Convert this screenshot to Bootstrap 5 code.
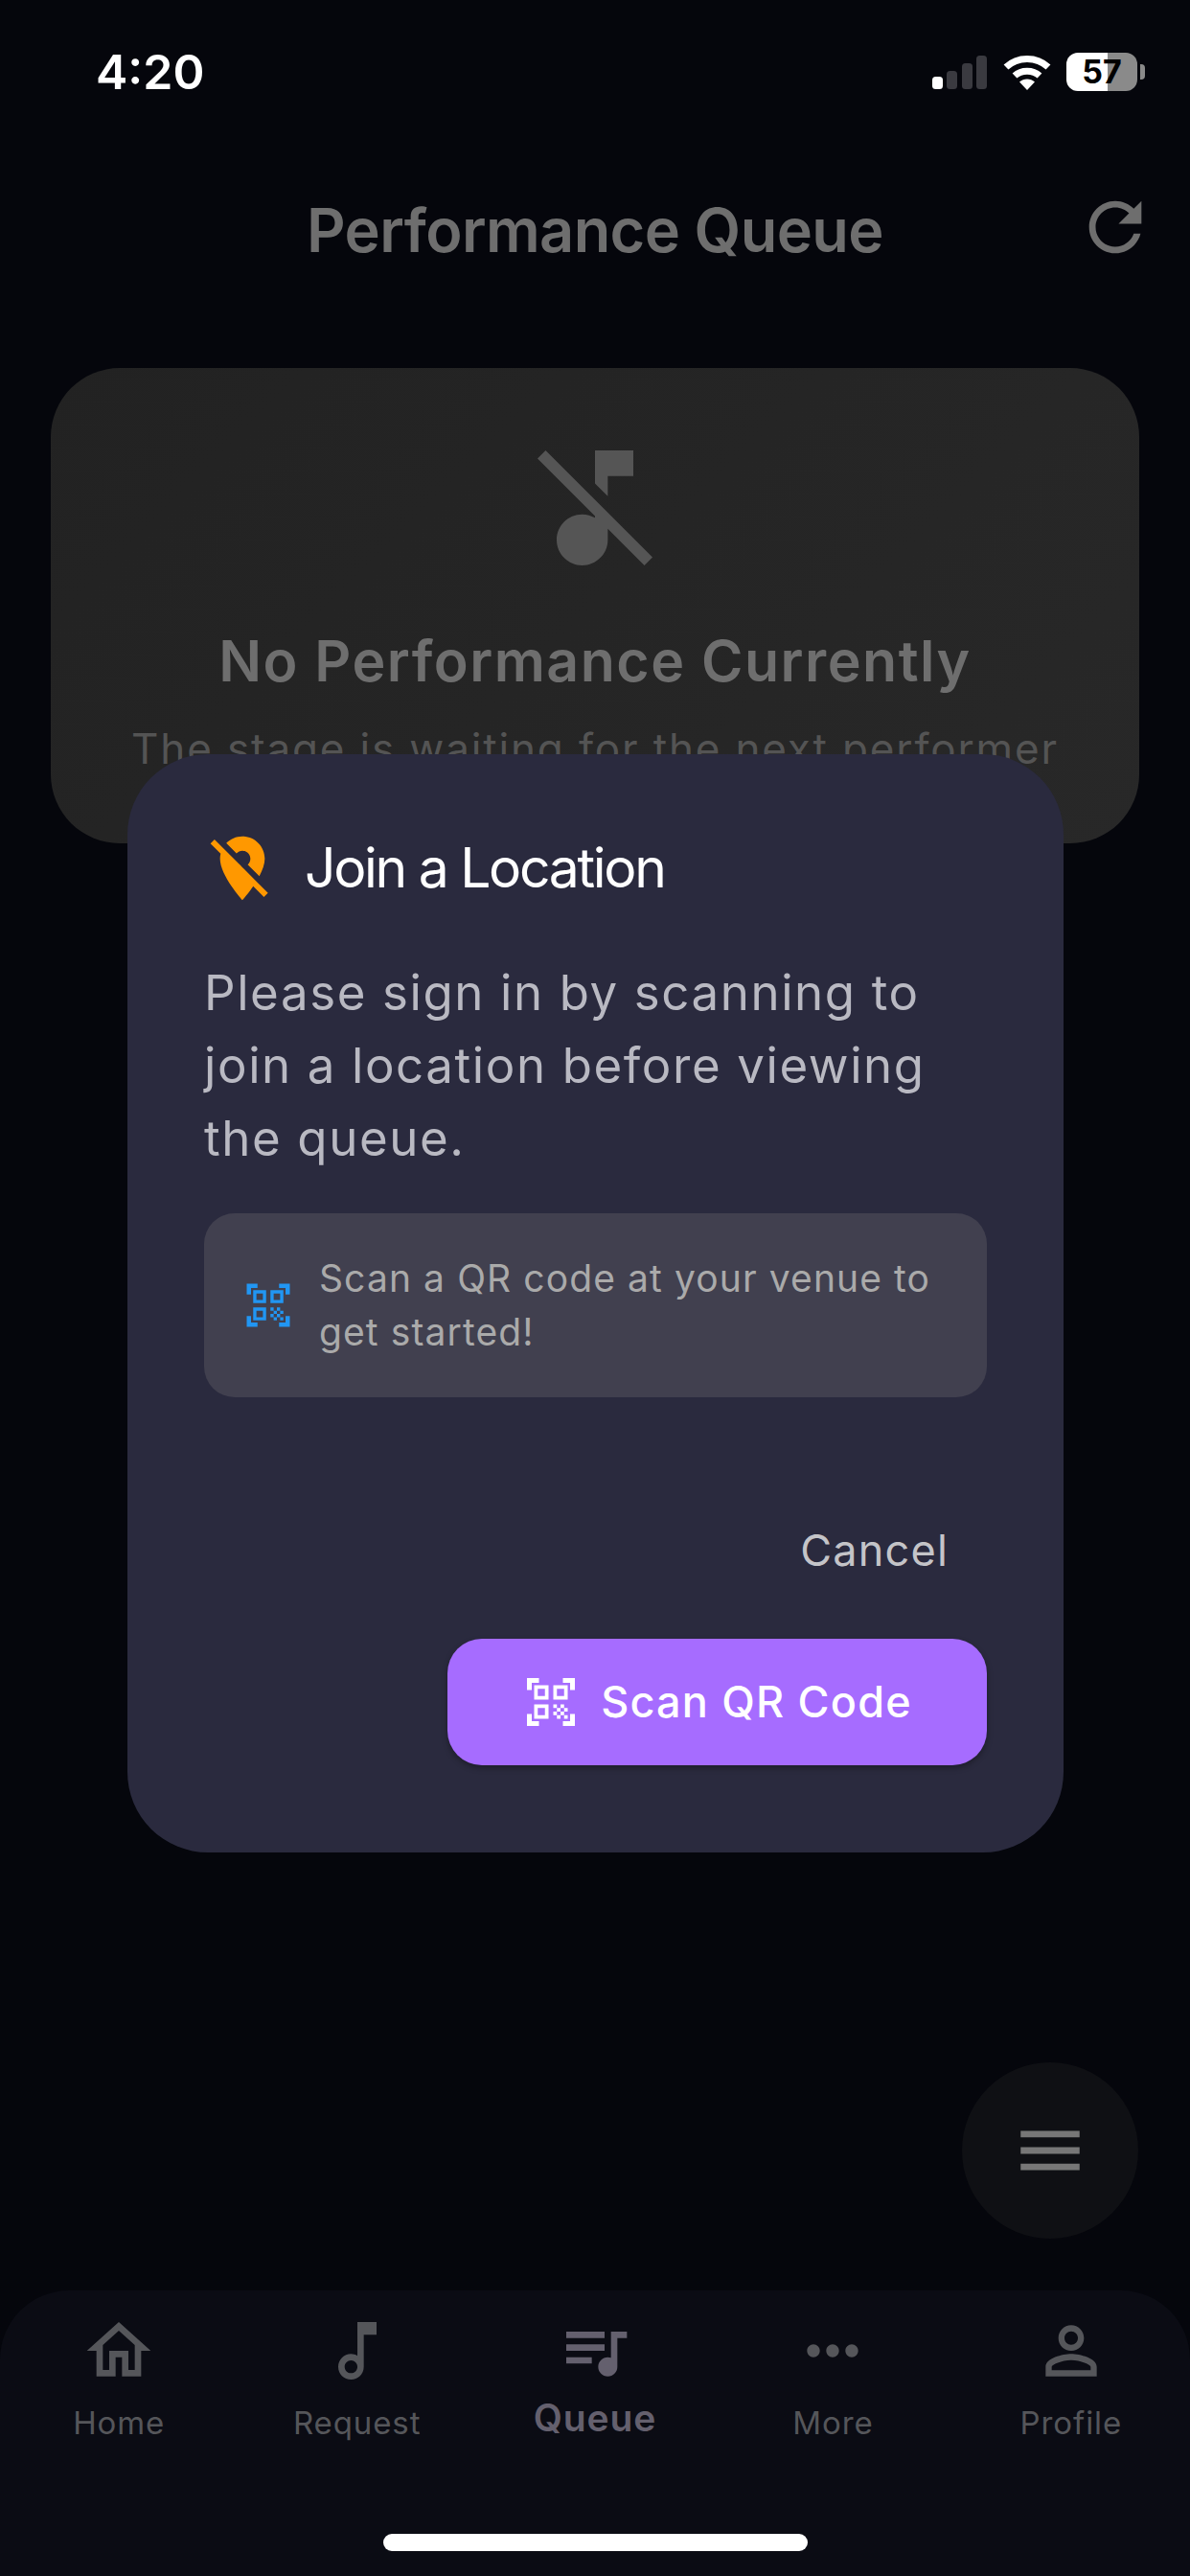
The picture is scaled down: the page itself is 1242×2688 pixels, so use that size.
<!DOCTYPE html>
<html lang="en">
<head>
<meta charset="utf-8">
<title>Performance Queue</title>
<link href="https://cdn.jsdelivr.net/npm/bootstrap@5.3.0/dist/css/bootstrap.min.css" rel="stylesheet">
<style>
html,body{margin:0;width:1242px;height:2688px;overflow:hidden}
body{background:#05060c;font-family:Inter,"Liberation Sans",sans-serif;position:relative}
.shell{height:2688px}
.statusbar{height:150px;padding:0 47px 0 100px;color:#fff}
.clock{font-size:50px;font-weight:600;line-height:150px}
.sig{gap:4.5px;height:35px}
.sig i{display:block;width:11px;background:#3a3a40;border-radius:3.5px}
.sig i:first-child{background:#fff}
.sig .h1b{height:13px}.sig .h2b{height:19px}.sig .h3b{height:27px}.sig .h4b{height:35px}
.wifi{width:50px;height:38px;margin:0 16px 0 17px;display:block}
.batt{width:74px;height:40px;border-radius:12px;background:linear-gradient(90deg,#fff 0 43px,#8a8a8a 43px);color:#000;font-size:34px;font-weight:700;line-height:40px;text-align:center}
.battnub{width:5px;height:16px;background:#8a8a8a;border-radius:0 4px 4px 0;margin-left:3px}
.topbar{padding:46px 37px 0}
.topbar .blank{width:82px}
.toptitle{font-size:63px;font-weight:600;color:#6e6e6e;margin:0;line-height:82px;letter-spacing:-.6px;position:relative;top:3px}
.stagecard{margin:106px 53px 0;height:496px;padding-top:66px;border:0;border-radius:72px;background:linear-gradient(135deg,#222,#282828)}
.stageicon{width:160px;height:160px;display:block;fill:#555}
.stagehead{font-size:59px;font-weight:600;line-height:68px;color:#6e6e6e;margin:46px 0 0;letter-spacing:1.5px}
.stagesub{font-size:44px;line-height:60px;color:#545454;margin:27px 0 0;letter-spacing:1.85px;white-space:nowrap}
.fabbtn{position:absolute;left:1004px;top:2152px;width:184px;height:184px;border-radius:50%;background:#0f1014}
.fabbtn svg{width:82px;height:82px;fill:#777}
.tabbar{height:298px;background:#0b0c14;border-radius:72px 72px 0 0;padding-top:23px}
.tabitem{flex:1 1 0;min-width:0}
.tabitem svg{width:80px;height:80px;fill:#55565a;display:block}
.tablabel{font-size:33px;line-height:44px;margin-top:13px;color:#55565a;letter-spacing:.9px}
.tabitem.on svg{fill:#64606e}
.tabitem.on .tablabel{font-size:39px;font-weight:600;line-height:48px;margin-top:6px;color:#64606e}
.homebar{width:443px;height:18px;border-radius:9px;background:#fff;margin-bottom:26px}
.joindialog{position:absolute;left:133px;top:787px;width:977px;height:1146px;border-radius:84px;background:#2a2a3e;padding:79px 80px 0}
.dlgicon{width:80px;height:80px;fill:#ff9800;display:block;margin-right:25px}
.dlgtitle{font-size:57px;line-height:80px;color:#fff;font-weight:400;margin:0;letter-spacing:-2.3px}
.dlgbody{font-size:51px;line-height:76px;color:#b9b9c2;margin:52px 0 0;letter-spacing:1.6px}
.hintbox{margin-top:40px;height:192px;border-radius:32px;background:#41404f;padding:0 40px}
.hinticon{width:54px;height:54px;fill:#2196f3;flex:none;margin-right:26px}
.hinttext{font-size:39px;line-height:56px;color:#aaa;letter-spacing:1.1px;margin:0}
.cancelbtn{font-size:45px;line-height:60px;color:#c4c4c8;font-weight:400;letter-spacing:1.2px;padding:0;margin:130px 40px 0 0;border:0;background:none}
.scanbtn{margin-top:62px;width:563px;height:132px;border-radius:36px;background:#a66cff;border:0;color:#fff;font-size:45px;font-weight:500;letter-spacing:1.2px;padding:0;box-shadow:0 3px 6px rgba(0,0,0,.3)}
.scanbtn:hover{background:#a66cff;color:#fff}
.scanbtn svg{width:60px;height:60px;fill:#fff;margin-right:22px}
</style>
</head>
<body>
<div class="shell d-flex flex-column">
  <div class="statusbar d-flex align-items-center justify-content-between flex-shrink-0">
    <div class="clock">4:20</div>
    <div class="d-flex align-items-center">
      <div class="sig d-flex align-items-end"><i class="h1b"></i><i class="h2b"></i><i class="h3b"></i><i class="h4b"></i></div>
      <svg class="wifi" viewBox="0 0 50 38" fill="none" stroke="#fff" stroke-width="7"><path d="M3 14C15 2.500 35 2.500 47 14"/><path d="M12 23C19 16.500 31 16.500 38 23"/><path d="M17 29.500C21.500 25.500 28.500 25.500 33 29.500L25 38Z" fill="#fff" stroke="none"/></svg>
      <div class="batt">57</div>
      <div class="battnub"></div>
    </div>
  </div>
  <div class="topbar d-flex align-items-center justify-content-between flex-shrink-0">
    <div class="blank"></div>
    <h1 class="toptitle">Performance Queue</h1>
    <svg width="82" height="82" viewBox="0 0 24 24" fill="#6e6e6e"><path d="M17.65 6.35C16.2 4.9 14.21 4 12 4c-4.42 0-7.99 3.58-7.99 8s3.57 8 7.99 8c3.730 0 6.840-2.550 7.730-6h-2.080c-.82 2.330-3.040 4-5.650 4-3.310 0-6-2.690-6-6s2.690-6 6-6c1.660 0 3.140.69 4.220 1.780L13 11h7V4l-2.350 2.350z"/></svg>
  </div>
  <div class="card stagecard align-items-center text-center flex-shrink-0">
    <svg class="stageicon" viewBox="0 0 24 24"><path d="M4.270 3L3 4.270l9 9v.28c-.59-.34-1.270-.55-2-.55-2.210 0-4 1.790-4 4s1.790 4 4 4 4-1.790 4-4v-1.730L19.730 21 21 19.730 4.270 3zM14 7h4V3h-6v5.180l2 2z"/></svg>
    <h2 class="stagehead">No Performance Currently</h2>
    <p class="stagesub">The stage is waiting for the next performer</p>
  </div>
  <div class="flex-grow-1"></div>
  <nav class="tabbar d-flex flex-column align-items-center flex-shrink-0">
    <div class="d-flex w-100">
      <div class="tabitem d-flex flex-column align-items-center">
        <svg viewBox="0 0 24 24"><path d="M12 5.690l5 4.500V18h-2v-6H9v6H7v-7.810l5-4.500M12 3L2 12h3v8h6v-6h2v6h6v-8h3L12 3z"/></svg>
        <div class="tablabel">Home</div>
      </div>
      <div class="tabitem d-flex flex-column align-items-center">
        <svg viewBox="0 0 24 24"><path d="M12 3l.01 10.550c-.59-.34-1.270-.55-2-.55C7.790 13 6 14.790 6 17s1.790 4 4.010 4S14 19.210 14 17V7h4V3h-6zm-1.990 16c-1.100 0-2-.9-2-2s.9-2 2-2 2 .9 2 2-.9 2-2 2z"/></svg>
        <div class="tablabel">Request</div>
      </div>
      <div class="tabitem on d-flex flex-column align-items-center">
        <svg viewBox="0 0 24 24"><path d="M15 6H3v2h12V6zm0 4H3v2h12v-2zM3 16h8v-2H3v2zM17 6v8.180c-.31-.11-.65-.18-1-.18-1.660 0-3 1.340-3 3s1.340 3 3 3 3-1.340 3-3V8h3V6h-5z"/></svg>
        <div class="tablabel">Queue</div>
      </div>
      <div class="tabitem d-flex flex-column align-items-center">
        <svg viewBox="0 0 24 24"><path d="M6 10c-1.100 0-2 .9-2 2s.9 2 2 2 2-.9 2-2-.9-2-2-2zm12 0c-1.100 0-2 .9-2 2s.9 2 2 2 2-.9 2-2-.9-2-2-2zm-6 0c-1.100 0-2 .9-2 2s.9 2 2 2 2-.9 2-2-.9-2-2-2z"/></svg>
        <div class="tablabel">More</div>
      </div>
      <div class="tabitem d-flex flex-column align-items-center">
        <svg viewBox="0 0 24 24"><path d="M12 5.900c1.160 0 2.100.94 2.100 2.100s-.94 2.100-2.100 2.100S9.900 9.160 9.900 8s.94-2.100 2.100-2.100m0 9c2.970 0 6.100 1.460 6.100 2.100v1.100H5.900V17c0-.64 3.130-2.100 6.100-2.100M12 4C9.790 4 8 5.790 8 8s1.790 4 4 4 4-1.790 4-4-1.790-4-4-4zm0 9c-2.670 0-8 1.340-8 4v3h16v-3c0-2.660-5.330-4-8-4z"/></svg>
        <div class="tablabel">Profile</div>
      </div>
    </div>
    <div class="homebar mt-auto"></div>
  </nav>
</div>

<div class="fabbtn d-flex align-items-center justify-content-center">
  <svg viewBox="0 0 24 24"><path d="M3 18h18v-2H3v2zm0-5h18v-2H3v2zm0-7v2h18V6H3z"/></svg>
</div>

<div class="joindialog d-flex flex-column" role="dialog">
  <div class="d-flex align-items-center">
    <svg class="dlgicon" viewBox="0 0 24 24"><path d="M12 6.500c1.380 0 2.500 1.120 2.500 2.500 0 .74-.33 1.390-.83 1.850l3.630 3.630c.98-1.860 1.700-3.800 1.700-5.480 0-3.870-3.130-7-7-7-1.980 0-3.760.83-5.040 2.150l3.190 3.190c.46-.52 1.110-.84 1.850-.84zm4.370 9.600l-4.630-4.630-.11-.11L3.270 3 2 4.270l3.180 3.180C5.070 7.950 5 8.470 5 9c0 5.250 7 13 7 13s1.670-1.850 3.380-4.350L18.730 21 20 19.730l-3.630-3.630z"/></svg>
    <h3 class="dlgtitle">Join a Location</h3>
  </div>
  <p class="dlgbody">Please sign in by scanning to join a location before viewing the queue.</p>
  <div class="hintbox d-flex align-items-center">
    <svg class="hinticon" viewBox="0 0 24 24"><path d="M9.500 6.500v3h-3v-3h3M11 5H5v6h6V5zm-1.500 9.500v3h-3v-3h3M11 13H5v6h6v-6zm6.500-6.500v3h-3v-3h3M19 5h-6v6h6V5zm-6 8h1.500v1.500H13V13zm1.500 1.500H16V16h-1.500v-1.500zM16 13h1.500v1.500H16V13zm-3 3h1.500v1.500H13V16zm1.500 1.500H16V19h-1.500v-1.500zM16 16h1.500v1.500H16V16zm1.500-1.500H19V16h-1.500v-1.500zm0 3H19V19h-1.500v-1.500zM22 7h-2V4h-3V2h5v5zm0 15v-5h-2v3h-3v2h5zM2 22h5v-2H4v-3H2v5zM2 2v5h2V4h3V2H2z"/></svg>
    <p class="hinttext">Scan a QR code at your venue to get started!</p>
  </div>
  <div class="d-flex flex-column align-items-end">
    <button type="button" class="btn cancelbtn">Cancel</button>
    <button type="button" class="btn scanbtn d-flex align-items-center justify-content-center">
      <svg viewBox="0 0 24 24"><path d="M9.500 6.500v3h-3v-3h3M11 5H5v6h6V5zm-1.500 9.500v3h-3v-3h3M11 13H5v6h6v-6zm6.500-6.500v3h-3v-3h3M19 5h-6v6h6V5zm-6 8h1.500v1.500H13V13zm1.500 1.500H16V16h-1.500v-1.500zM16 13h1.500v1.500H16V13zm-3 3h1.500v1.500H13V16zm1.500 1.500H16V19h-1.500v-1.500zM16 16h1.500v1.500H16V16zm1.500-1.500H19V16h-1.500v-1.500zm0 3H19V19h-1.500v-1.500zM22 7h-2V4h-3V2h5v5zm0 15v-5h-2v3h-3v2h5zM2 22h5v-2H4v-3H2v5zM2 2v5h2V4h3V2H2z"/></svg>
      Scan QR Code
    </button>
  </div>
</div>
<script src="https://cdn.jsdelivr.net/npm/bootstrap@5.3.0/dist/js/bootstrap.bundle.min.js"></script>
</body>
</html>
